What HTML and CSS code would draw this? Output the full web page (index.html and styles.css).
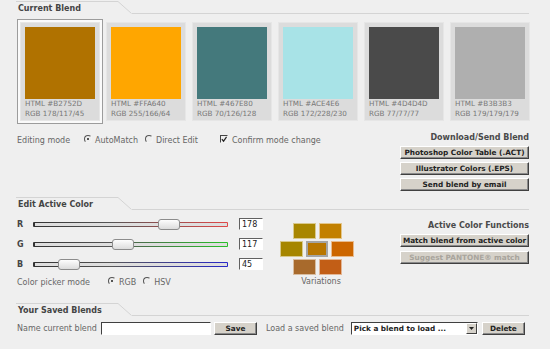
FILE: index.html
```html
<!DOCTYPE html>
<html lang="en">
<head>
  <meta charset="UTF-8">
  <title>Color Blender</title>
  <link rel="stylesheet" href="styles.css">
</head>
<body>
  <div class="page">
    <div class="section-head head-top">
      <span class="tab">Current Blend</span>
      <svg class="tab-edge" width="14" height="13" viewBox="0 0 14 13"><line x1="0" y1="0.5" x2="13.5" y2="12.5" stroke="#d4d4d4" stroke-width="1"/></svg>
      <span class="tab-rule"></span>
    </div>

    <div class="swatches">
      <div class="swatch selected"><div class="chip" style="background:#b07200"></div><p>HTML #B2752D<br>RGB 178/117/45</p></div>
      <div class="swatch"><div class="chip" style="background:#ffa600"></div><p>HTML #FFA640<br>RGB 255/166/64</p></div>
      <div class="swatch"><div class="chip" style="background:#44797c"></div><p>HTML #467E80<br>RGB 70/126/128</p></div>
      <div class="swatch"><div class="chip" style="background:#a8e3e7"></div><p>HTML #ACE4E6<br>RGB 172/228/230</p></div>
      <div class="swatch"><div class="chip" style="background:#4a4a4a"></div><p>HTML #4D4D4D<br>RGB 77/77/77</p></div>
      <div class="swatch"><div class="chip" style="background:#afafaf"></div><p>HTML #B3B3B3<br>RGB 179/179/179</p></div>
    </div>

    <div class="split split-blend">
      <div class="option-row edit-mode">
        <span class="label edit-label">Editing mode</span>
        <span class="radio on"></span><span class="opt">AutoMatch</span>
        <span class="radio second"></span><span class="opt">Direct Edit</span>
        <span class="check on"><svg width="7" height="7" viewBox="0 0 7 7"><polyline points="1,3 3,5.5 6.5,0.5" fill="none" stroke="#222" stroke-width="1.4"/></svg></span><span class="opt">Confirm mode change</span>
      </div>
      <div class="actions">
        <h4>Download/Send Blend</h4>
        <button class="button">Photoshop Color Table (.ACT)</button>
        <button class="button">Illustrator Colors (.EPS)</button>
        <button class="button">Send blend by email</button>
      </div>
    </div>

    <div class="section-head head-edit">
      <span class="tab">Edit Active Color</span>
      <svg class="tab-edge" width="14" height="13" viewBox="0 0 14 13"><line x1="0" y1="0.5" x2="13.5" y2="12.5" stroke="#d4d4d4" stroke-width="1"/></svg>
      <span class="tab-rule"></span>
    </div>

    <div class="split split-edit">
      <div class="sliders">
        <div class="slider-row">
          <span class="channel">R</span>
          <div class="track track-r"><span class="thumb" style="left:125px"></span></div>
          <input class="value" type="text" value="178">
        </div>
        <div class="slider-row">
          <span class="channel">G</span>
          <div class="track track-g"><span class="thumb" style="left:79px"></span></div>
          <input class="value" type="text" value="117">
        </div>
        <div class="slider-row">
          <span class="channel">B</span>
          <div class="track track-b"><span class="thumb" style="left:25px"></span></div>
          <input class="value" type="text" value="45">
        </div>
        <div class="option-row picker-mode">
          <span class="label picker-label">Color picker mode</span>
          <span class="radio on"></span><span class="opt">RGB</span>
          <span class="radio second"></span><span class="opt">HSV</span>
        </div>
      </div>

      <div class="variations">
        <div class="tile-row">
          <span class="tile" style="background:#a88600"></span>
          <span class="tile" style="background:#c28000"></span>
        </div>
        <div class="tile-row">
          <span class="tile" style="background:#a68600"></span>
          <span class="tile active" style="background:#b87600"></span>
          <span class="tile" style="background:#cc6600"></span>
        </div>
        <div class="tile-row">
          <span class="tile" style="background:#a86a2c"></span>
          <span class="tile" style="background:#c25e16"></span>
        </div>
        <p class="variations-label">Variations</p>
      </div>

      <div class="actions actions-color">
        <h4>Active Color Functions</h4>
        <button class="button">Match blend from active color</button>
        <button class="button" disabled>Suggest PANTONE&reg; match</button>
      </div>
    </div>

    <div class="section-head head-saved">
      <span class="tab">Your Saved Blends</span>
      <svg class="tab-edge" width="14" height="13" viewBox="0 0 14 13"><line x1="0" y1="0.5" x2="13.5" y2="12.5" stroke="#d4d4d4" stroke-width="1"/></svg>
      <span class="tab-rule"></span>
    </div>

    <div class="saved-row">
      <span class="label">Name current blend</span>
      <input class="name-input" type="text">
      <button class="button small">Save</button>
      <span class="label load-label">Load a saved blend</span>
      <div class="select"><span>Pick a blend to load ...</span><span class="select-btn"><svg width="5" height="3" viewBox="0 0 5 3"><polygon points="0,0 5,0 2.5,3" fill="#222"/></svg></span></div>
      <button class="button small">Delete</button>
    </div>
  </div>
</body>
</html>
```

FILE: styles.css
```css
body {
  margin: 0;
  background-color: #efefef;
  font-family: "DejaVu Sans", Verdana, sans-serif;
  font-size: 8px;
  color: #666;
}

.page {
  width: 513px;
  padding-left: 16px;
}

/* section headers with slanted tab */
.section-head {
  display: flex;
  height: 13px;
}

.head-top {
  margin-top: 1px;
}

.head-edit {
  margin-top: 6px;
}

.head-saved {
  margin-top: 15px;
}

.tab {
  width: 100px;
  padding-left: 2px;
  border-top: 1px solid #d4d4d4;
  font-weight: bold;
  color: #444;
  line-height: 13px;
}

.tab-edge {
  display: block;
  flex: none;
}

.tab-rule {
  flex: 1;
  border-bottom: 1px solid #d4d4d4;
}

/* swatches */
.swatches {
  display: flex;
  gap: 6px;
  margin-top: 8px;
  padding-left: 4px;
}

.swatch {
  box-sizing: border-box;
  width: 80px;
  padding: 4px 4px 1px 4px;
  border: 1px solid #e6e6e6;
  background-color: #dcdcdc;
}

.swatch.selected {
  box-shadow: 0 0 0 2px #fafafa, 0 0 0 3px #9c9c9c;
}

.chip {
  width: 70px;
  height: 72px;
}

.swatch p {
  margin: 0;
  font-size: 7.2px;
  line-height: 10px;
  color: #777;
  white-space: nowrap;
}

/* two column rows */
.split {
  display: flex;
  align-items: flex-start;
}

.split-blend {
  margin-top: 11px;
}

.actions {
  margin-left: auto;
  width: 129px;
  display: flex;
  flex-direction: column;
}

.actions h4 {
  margin: 0;
  font-size: 8px;
  line-height: 12px;
  color: #4a4a4a;
  text-align: right;
}

.button {
  box-sizing: border-box;
  height: 13px;
  margin-top: 3px;
  padding: 0;
  background-color: #d6d2ca;
  border: 1px solid;
  border-color: #fff #404040 #404040 #fff;
  box-shadow: inset -1px -1px 0 #8a8a8a;
  font-family: "DejaVu Sans", Verdana, sans-serif;
  font-size: 7.3px;
  font-weight: bold;
  color: #222;
  line-height: 10px;
}

.actions h4 + .button {
  margin-top: 2px;
}

.button:disabled {
  color: #a8a49c;
}

.button.small {
  width: 43px;
  margin-top: 0;
}

/* radios and checkbox */
.option-row {
  display: flex;
  align-items: center;
  height: 12px;
  padding-left: 1px;
}

.edit-mode {
  margin-top: 2px;
}

.label {
  color: #666;
  white-space: nowrap;
}

.edit-label {
  width: 67px;
}

.picker-label {
  width: 91px;
}

.radio {
  box-sizing: border-box;
  position: relative;
  width: 8px;
  height: 8px;
  margin-right: 3px;
  margin-top: -3px;
  border-radius: 50%;
  border: 1px solid;
  border-color: #555 #f4f4f4 #f4f4f4 #555;
  background-color: #efefef;
}

.radio.on::after {
  content: "";
  position: absolute;
  left: 2px;
  top: 2px;
  width: 2px;
  height: 2px;
  border-radius: 50%;
  background-color: #222;
}

.radio.second {
  margin-left: 7px;
}

.check {
  box-sizing: border-box;
  display: flex;
  width: 8px;
  height: 8px;
  margin-left: 22px;
  margin-right: 4px;
  margin-top: -3px;
  border: 1px solid;
  border-color: #444 #f4f4f4 #f4f4f4 #444;
  background-color: #efefef;
}

.check svg {
  display: block;
}

.opt {
  color: #666;
  white-space: nowrap;
}

/* sliders */
.split-edit {
  margin-top: 4px;
}

.sliders {
  width: 247px;
}

.slider-row {
  display: flex;
  align-items: center;
  height: 20px;
  padding-left: 1px;
}

.channel {
  width: 16px;
  font-weight: bold;
  color: #444;
}

.track {
  position: relative;
  box-sizing: border-box;
  width: 195px;
  height: 5px;
  border-radius: 1px;
}

.track::before {
  content: "";
  position: absolute;
  left: 2px;
  right: 1px;
  top: 1px;
  bottom: 1px;
  background-color: #dedede;
}

.track-r {
  background: linear-gradient(to right, #333, #555 40%, #e04848);
}

.track-g {
  background: linear-gradient(to right, #333, #555 40%, #28c028);
}

.track-b {
  background: linear-gradient(to right, #333, #555 40%, #2828c8);
}

.thumb {
  position: absolute;
  top: -3px;
  box-sizing: border-box;
  width: 22px;
  height: 11px;
  border: 1px solid #8c8c8c;
  border-radius: 3px;
  background: linear-gradient(#fdfdfd, #dcdcdc);
}

.thumb::after {
  content: "";
  position: absolute;
  left: 7px;
  top: 2px;
  width: 7px;
  height: 5px;
  background-image: radial-gradient(#aaa 0.6px, transparent 0.7px);
  background-size: 2px 2px;
}

.value {
  box-sizing: border-box;
  width: 24px;
  height: 12px;
  margin-left: 11px;
  padding: 0 0 0 2px;
  border: 1px solid;
  border-color: #606060 #fff #fff #606060;
  background-color: #fff;
  font-family: "DejaVu Sans", Verdana, sans-serif;
  font-size: 8px;
  color: #222;
}

.picker-mode {
  margin-top: 2px;
}

/* variations */
.variations {
  margin-left: 17px;
  padding-top: 9px;
  width: 74px;
}

.tile-row {
  display: flex;
  justify-content: center;
  gap: 3px;
  margin-bottom: 2px;
}

.tile {
  box-sizing: border-box;
  width: 23px;
  height: 16px;
  border: 1px solid rgba(255, 255, 255, 0.55);
}

.tile.active {
  border: 2px solid #a4a4a4;
}

.variations-label {
  margin: 2px 0 0 0;
  text-align: center;
  padding-left: 8px;
  color: #666;
}

.actions-color {
  margin-top: 6px;
}

.actions-color .button {
  margin-top: 4px;
}

/* saved blends */
.saved-row {
  display: flex;
  align-items: center;
  height: 13px;
  margin-top: 6px;
  padding-left: 1px;
}

.name-input {
  box-sizing: border-box;
  width: 110px;
  height: 13px;
  margin-left: 4px;
  margin-right: 3px;
  border: 1px solid;
  border-color: #404040 #fff #fff #404040;
  background-color: #fff;
}

.load-label {
  margin-left: 9px;
}

.select {
  box-sizing: border-box;
  display: flex;
  align-items: center;
  width: 127px;
  height: 13px;
  margin-left: 7px;
  margin-right: 4px;
  padding-left: 2px;
  border: 1px solid;
  border-color: #404040 #fff #fff #404040;
  background-color: #fff;
  font-size: 7.3px;
  font-weight: bold;
  color: #222;
}

.select span:first-child {
  flex: 1;
}

.select-btn {
  box-sizing: border-box;
  display: flex;
  align-items: center;
  justify-content: center;
  width: 11px;
  height: 11px;
  background-color: #d6d2ca;
  border: 1px solid;
  border-color: #fff #404040 #404040 #fff;
}

.select-btn svg {
  display: block;
}
```
